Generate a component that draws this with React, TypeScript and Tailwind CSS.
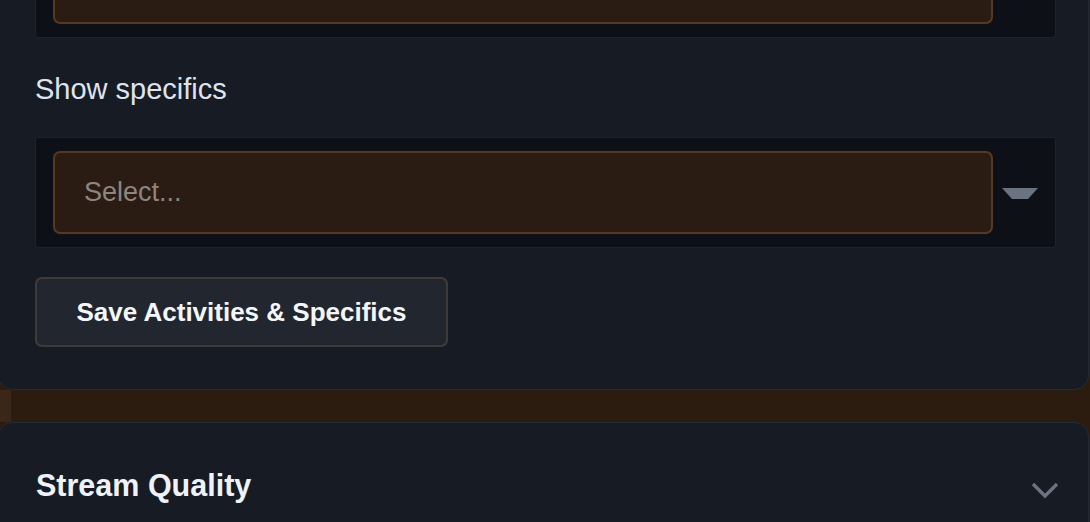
function SelectBox({ placeholder }: { placeholder: string }) {
  return (
    <div className="flex h-[111px] items-center rounded-[3px] border border-[#1d222c] bg-[#0d1017] pl-[17px]">
      <div className="flex h-[83px] w-[940px] items-center rounded-[7px] border-2 border-[#573920] bg-[#2b1c13] pl-[29px]">
        <span className="text-[27px] text-[#8b8680]">{placeholder}</span>
      </div>
      <div className="flex flex-1 justify-center pr-[8px]">
        <svg width="36" height="12" viewBox="0 0 36 12" className="mt-[3px]">
          <polygon points="0,0 36,0 26,11 10,11" fill="#6b7280" />
        </svg>
      </div>
    </div>
  );
}

export default function App() {
  return (
    <div
      className="flex h-[522px] w-[1090px] flex-col overflow-hidden bg-[#2c1c10]"
      style={{ fontFamily: '"Liberation Sans", Arial, sans-serif' }}
    >
      <div className="mt-[-74px] mr-[1px] ml-[-2px] shrink-0 rounded-[14px] border border-[#252b36] bg-[#171b23] pr-[32px] pb-[42px] pl-[36px]">
        <SelectBox placeholder="" />
        <p className="mt-[34px] mb-[31px] text-[29px] leading-[34px] text-[#dde4f0]">Show specifics</p>
        <SelectBox placeholder="Select..." />
        <button className="mt-[29px] flex h-[70px] w-[413px] items-center justify-center rounded-[7px] border-2 border-[#3f3b39] bg-[#22262e] text-[26px] font-bold text-[#f3f6fb]">
          Save Activities &amp; Specifics
        </button>
      </div>
      <div className="flex h-[32px] shrink-0">
        <div className="w-[11px] bg-[#3a2717]" />
        <div className="flex-1" />
      </div>
      <div className="mr-[1px] ml-[-2px] flex h-[140px] shrink-0 items-start justify-between rounded-[14px] border border-[#252b36] bg-[#171b23] pt-[42px] pr-[29px] pl-[37px]">
        <h2 className="text-[30.5px] leading-[40px] font-bold text-[#eef3fb]">Stream Quality</h2>
        <svg width="28" height="18" viewBox="0 0 28 18" className="mt-[16px]">
          <polyline points="2,3 14,15 26,3" fill="none" stroke="#6b7280" strokeWidth="3.4" />
        </svg>
      </div>
    </div>
  );
}
